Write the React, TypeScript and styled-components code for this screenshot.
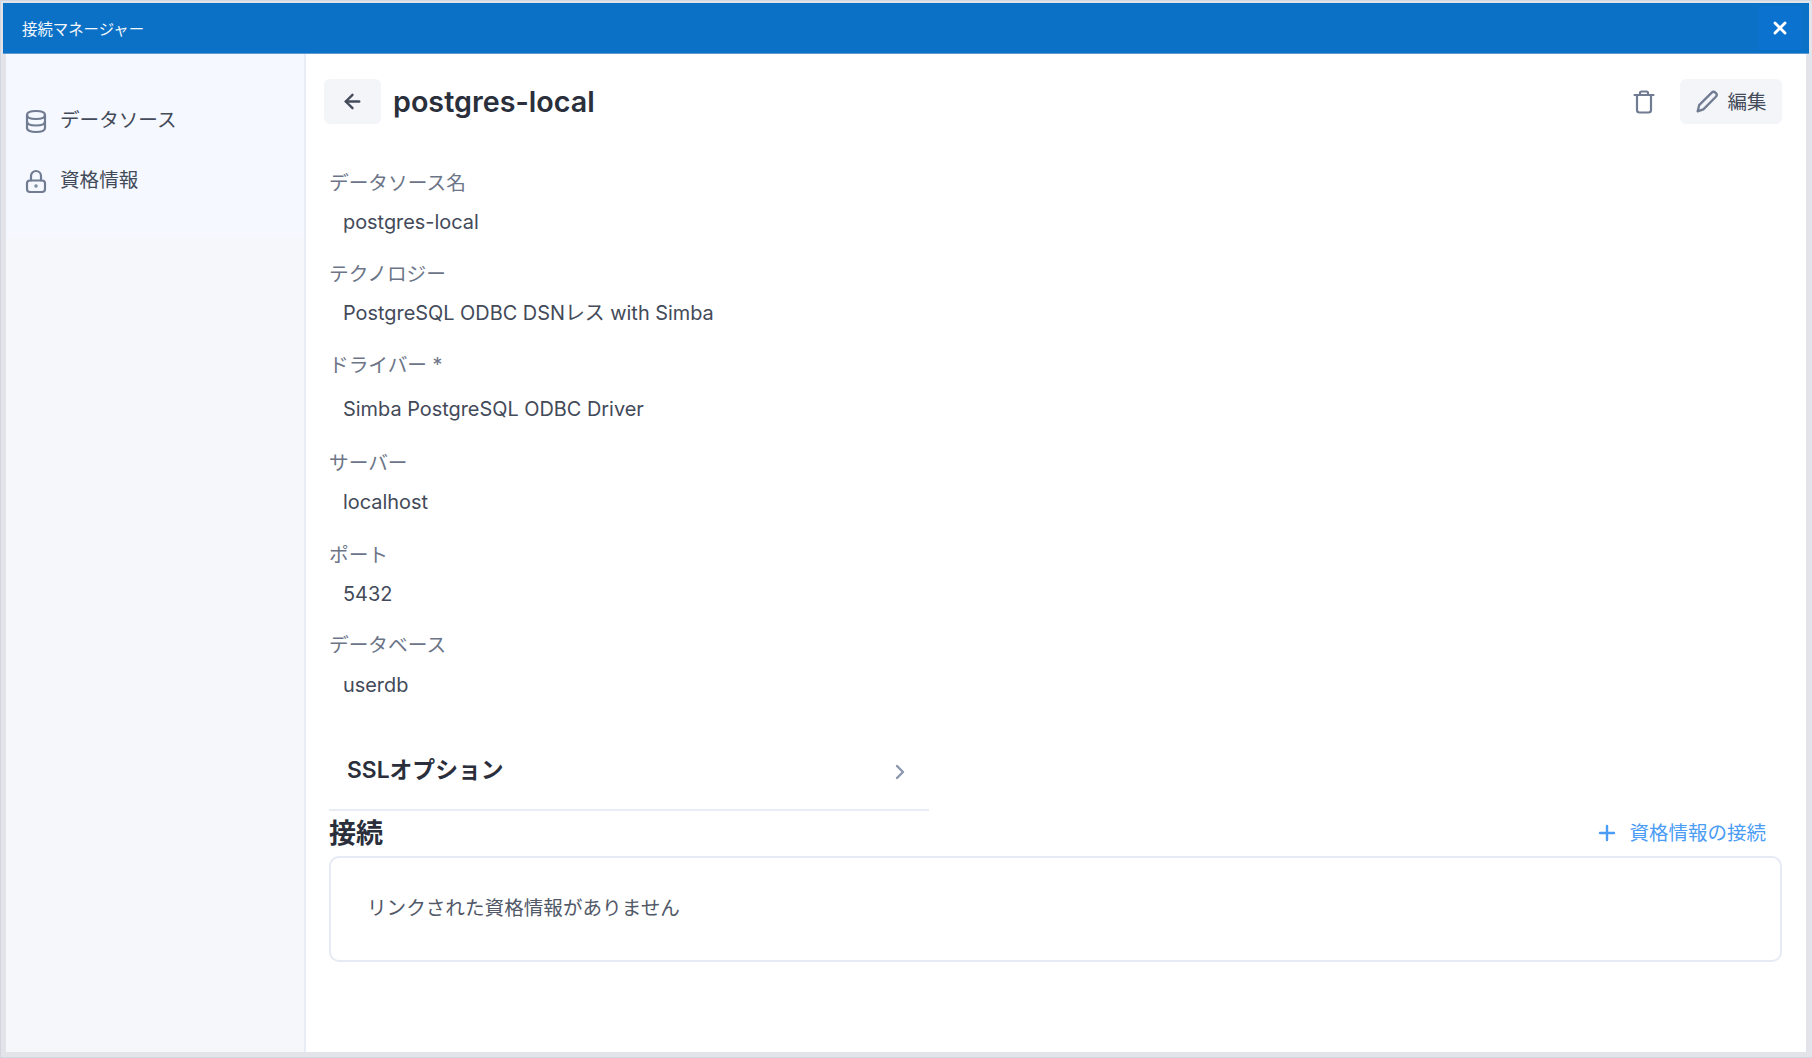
import React from "react";
import styled, { createGlobalStyle } from "styled-components";
import { ArrowLeft, ChevronRight, Plus, X } from "lucide-react";

const Global = createGlobalStyle`
  html, body { margin: 0; padding: 0; height: 100%; background: #e4e6ec; }
  #root { height: 100%; }
  * { box-sizing: border-box; }
  body { font-family: Inter, "Noto Sans CJK JP", sans-serif; }
`;

const Frame = styled.div`
  width: 1812px; height: 1058px; display: flex; flex-direction: column;
  padding: 2px 3px 5px 2px; background: #e2e4ea; border: 1px solid #d3d7e2; border-right: none;
`;
const TitleBar = styled.header`
  height: 51px; flex: none; display: flex; align-items: center; justify-content: space-between;
  background: #0b71c6; padding-left: 19px; color: #f2f7fc; font-size: 15.4px; border-bottom: 1px solid #5e9ad2;
`;
const CloseButton = styled.button`
  width: 42px; height: 44px; margin-right: 8px; border: none; background: #0c72d0; color: #fff;
  display: flex; align-items: center; justify-content: center; padding: 0;
`;
const Body = styled.div`flex: 1; display: flex; min-height: 0; padding: 0 3px;`;
const Sidebar = styled.aside`
  width: 300px; flex: none; background: #f5f7fb; border-right: 2px solid #e8ecf5;
`;
const SideNav = styled.nav`
  height: 184px; background: #f5f9ff; padding: 44px 0 0 19px; display: flex; flex-direction: column; gap: 20px;
`;
const NavItem = styled.div`
  display: flex; align-items: center; gap: 13px; height: 40px; color: #434a59; font-size: 19.6px;
  svg { flex: none; margin-top: 6px; }
`;
const Main = styled.main`
  flex: 1; min-width: 0; background: #fff; padding: 25px 24px 0 18px; display: flex; flex-direction: column;
`;
const Header = styled.div`display: flex; align-items: center; height: 45px;`;
const BackButton = styled.button`
  width: 57px; height: 45px; border: none; border-radius: 6px; background: #f3f5f9; color: #434a59;
  display: flex; align-items: center; justify-content: center; padding: 0;
`;
const Title = styled.h1`
  margin: 0 0 1px 12px; font-size: 28.7px; font-weight: 600; color: #2a2f3b; flex: 1;
`;
const IconButton = styled.button`
  width: 44px; height: 44px; border: none; background: none; padding: 0; margin-right: 14px;
  display: flex; align-items: center; justify-content: center;
`;
const EditButton = styled.button`
  width: 102px; height: 45px; border: none; border-radius: 6px; background: #f3f5f9; color: #434a59;
  display: flex; align-items: center; justify-content: center; gap: 8px; font: inherit; font-size: 19.5px; padding: 0 0 2px;
  svg { margin-top: 2px; }
`;
const Content = styled.div`padding: 45px 0 0 5px; display: flex; flex-direction: column;`;
const Field = styled.div<{ $h: number }>`height: ${p => p.$h}px; display: flex; flex-direction: column;`;
const Label = styled.div`font-size: 19.7px; line-height: 28px; color: #6c7587;`;
const Value = styled.div<{ $top?: number }>`
  font-size: 19.9px; line-height: 28px; color: #434a59; padding: ${p => p.$top ?? 11}px 0 0 14px;
`;
const Accordion = styled.div`
  width: 600px; height: 83px; margin-top: 7px; padding: 0 17px 0 18px; border-bottom: 2px solid #e8ecf5;
  display: flex; align-items: center; justify-content: space-between; color: #2a2f3b;
  font-size: 22.8px; font-weight: 600;
  svg { color: #8a97ad; margin-top: 6px; }
`;
const ConnHeader = styled.div`display: flex; align-items: center; justify-content: space-between; height: 45px; padding: 0 16px 5px 0;`;
const ConnTitle = styled.h2`margin: 0; font-size: 27px; font-weight: 600; color: #2a2f3b;`;
const LinkAction = styled.div`
  display: flex; align-items: center; gap: 10px; color: #4a9cf5; font-size: 19.5px;
  svg { margin-top: 3px; }
`;
const EmptyCard = styled.div`
  height: 106px; border: 2px solid #e6eaf4; border-radius: 10px; padding: 0 0 6px 36px; display: flex; align-items: center;
  color: #515868; font-size: 19.6px;
`;

const ICON = { fill: "none", stroke: "#717c92", strokeWidth: 2.2, strokeLinecap: "round", strokeLinejoin: "round" } as const;

const DatabaseIcon = () => (
  <svg width="22" height="25" viewBox="-1 -1 22 25" {...ICON}>
    <path d="M1 5C1 2.500 5 1 10 1s9 1.500 9 4v13c0 2.500-4 4-9 4s-9-1.500-9-4Z" />
    <path d="M1 5c0 2.500 4 4 9 4s9-1.500 9-4" />
    <path d="M1 11.500c0 2.500 4 4 9 4s9-1.500 9-4" />
  </svg>
);
const LockIcon = () => (
  <svg width="22" height="25" viewBox="-1 -1 22 25" {...ICON}>
    <rect x="1" y="10.500" width="18" height="11.500" rx="3" />
    <path d="M5 10.500V6a5 5 0 0 1 10 0v4.500" />
    <circle cx="10" cy="16" r="0.600" fill="#717c92" />
  </svg>
);
const TrashIcon = () => (
  <svg width="22" height="24" viewBox="0 0 22 24" {...ICON}>
    <path d="M1.500 5h19" />
    <path d="M7 5V3a1.500 1.500 0 0 1 1.500-1.500h5A1.500 1.500 0 0 1 15 3v2" />
    <path d="M4 5v15a2.500 2.500 0 0 0 2.500 2.500h9A2.500 2.500 0 0 0 18 20V5" />
  </svg>
);
const PencilIcon = () => (
  <svg width="24" height="23" viewBox="0 0 22 22" {...ICON}>
    <path d="M15.500 2.500a2.500 2.500 0 0 1 3.500 0l.5.5a2.500 2.500 0 0 1 0 3.500L7.500 18.500 2 20.500l1.500-6Z" />
  </svg>
);

const fields = [
  { label: "データソース名", value: "postgres-local", h: 91 },
  { label: "テクノロジー", value: "PostgreSQL ODBC DSNレス with Simba", h: 91 },
  { label: "ドライバー *", value: "Simba PostgreSQL ODBC Driver", h: 98, top: 16 },
  { label: "サーバー", value: "localhost", h: 92 },
  { label: "ポート", value: "5432", h: 90 },
  { label: "データベース", value: "userdb", h: 90, top: 12 },
];

export default function App() {
  return (
    <>
      <Global />
      <Frame>
        <TitleBar>
          <span>接続マネージャー</span>
          <CloseButton><X size={20} strokeWidth={3.4} /></CloseButton>
        </TitleBar>
        <Body>
          <Sidebar>
            <SideNav>
              <NavItem><DatabaseIcon />データソース</NavItem>
              <NavItem><LockIcon />資格情報</NavItem>
            </SideNav>
          </Sidebar>
          <Main>
            <Header>
              <BackButton><ArrowLeft size={23} strokeWidth={2.5} /></BackButton>
              <Title>postgres-local</Title>
              <IconButton><TrashIcon /></IconButton>
              <EditButton><PencilIcon />編集</EditButton>
            </Header>
            <Content>
              {fields.map(f => (
                <Field key={f.label} $h={f.h}>
                  <Label>{f.label}</Label>
                  <Value $top={f.top}>{f.value}</Value>
                </Field>
              ))}
              <Accordion>SSLオプション<ChevronRight size={24} strokeWidth={2.4} /></Accordion>
              <ConnHeader>
                <ConnTitle>接続</ConnTitle>
                <LinkAction><Plus size={24} strokeWidth={2.4} />資格情報の接続</LinkAction>
              </ConnHeader>
              <EmptyCard>リンクされた資格情報がありません</EmptyCard>
            </Content>
          </Main>
        </Body>
      </Frame>
    </>
  );
}
